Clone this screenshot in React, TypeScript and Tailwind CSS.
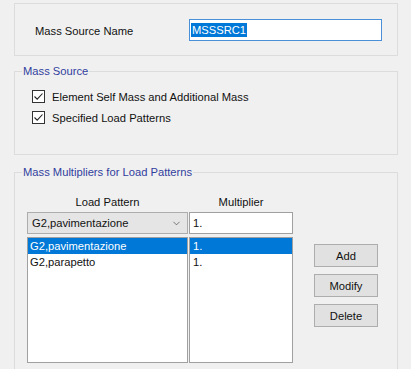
import { ChevronDown } from "lucide-react";

const patterns = [
  { name: "G2,pavimentazione", mult: "1.", selected: true },
  { name: "G2,parapetto", mult: "1.", selected: false },
];

function CheckBox() {
  return (
    <div className="w-[13px] h-[13px] border border-[#333333] bg-white flex items-center justify-center">
      <svg width="11" height="11" viewBox="0 0 11 11">
        <path d="M1.5 5.5 L4.2 8.2 L9.5 2.5" fill="none" stroke="#222" strokeWidth="1.1" />
      </svg>
    </div>
  );
}

function Button({ label }: { label: string }) {
  return (
    <button className="w-[64px] h-[23px] bg-[#e1e1e1] border border-[#adadad] text-[#111111]">
      {label}
    </button>
  );
}

export default function App() {
  return (
    <div className="w-[411px] h-[369px] overflow-hidden bg-[#f0f0f0] pl-[14px] pt-[3px] font-['Liberation_Sans',Arial,sans-serif] text-[11.2px] leading-[14px] text-[#111111]">
      {/* name */}
      <div className="w-[384px] h-[53px] border border-[#dcdcdc] flex items-center pl-[20px]">
        <div className="w-[154px] pt-[3px]">Mass Source Name</div>
        <div className="w-[193px] h-[22px] border border-[#4a90d9] bg-white flex items-center pl-[1px]">
          <span className="bg-[#0078d7] text-white px-[1px]">MSSSRC1</span>
        </div>
      </div>

      {/* mass source */}
      <fieldset className="mt-[8px] w-[384px] h-[91px] border border-[#dcdcdc]">
        <legend className="ml-[7px] px-[1px] text-[#30409e]">Mass Source</legend>
        <div className="pl-[17px] pt-[11px] flex flex-col gap-[6px]">
          <div className="h-[15px] flex items-center gap-[7px]">
            <CheckBox />
            <span>Element Self Mass and Additional Mass</span>
          </div>
          <div className="h-[15px] flex items-center gap-[7px]">
            <CheckBox />
            <span>Specified Load Patterns</span>
          </div>
        </div>
      </fieldset>

      {/* multipliers */}
      <fieldset className="mt-[10px] w-[384px] h-[220px] border border-[#dcdcdc]">
        <legend className="ml-[7px] px-[1px] text-[#30409e]">Mass Multipliers for Load Patterns</legend>
        <div className="pl-[12px] pt-[16px]">
          <div className="flex">
            <div className="w-[161px] text-center">Load Pattern</div>
            <div className="w-[104px] ml-[1px] text-center">Multiplier</div>
          </div>
          <div className="flex mt-[3px]">
            <div className="w-[161px] h-[22px] bg-[#e5e5e5] border border-[#adadad] flex items-center justify-between pl-[4px] pr-[5px]">
              <span>G2,pavimentazione</span>
              <ChevronDown className="w-[11px] h-[11px] text-[#444444]" strokeWidth={1.5} />
            </div>
            <div className="w-[104px] h-[22px] ml-[1px] bg-white border border-[#a0a0a0] flex items-center pl-[3px]">
              1.
            </div>
          </div>
          <div className="flex mt-[3px]">
            <div className="w-[161px] h-[126px] bg-white border border-[#a0a0a0]">
              {patterns.map((p) => (
                <div
                  key={p.name}
                  className={`h-[16px] flex items-center pl-[2px] ${p.selected ? "bg-[#0078d7] text-white" : ""}`}
                >
                  {p.name}
                </div>
              ))}
            </div>
            <div className="w-[104px] h-[126px] ml-[1px] bg-white border border-[#a0a0a0]">
              {patterns.map((p) => (
                <div
                  key={p.name}
                  className={`h-[16px] flex items-center pl-[3px] ${p.selected ? "bg-[#0078d7] text-white" : ""}`}
                >
                  {p.mult}
                </div>
              ))}
            </div>
            <div className="ml-[21px] pt-[7px] flex flex-col gap-[7px]">
              <Button label="Add" />
              <Button label="Modify" />
              <Button label="Delete" />
            </div>
          </div>
        </div>
      </fieldset>
    </div>
  );
}
